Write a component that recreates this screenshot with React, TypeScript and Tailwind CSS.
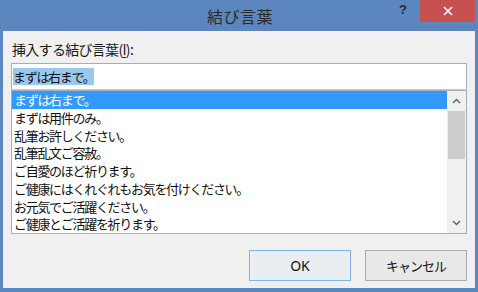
import React from "react";

const items = [
  "まずは右まで。",
  "まずは用件のみ。",
  "乱筆お許しください。",
  "乱筆乱文ご容赦。",
  "ご自愛のほど祈ります。",
  "ご健康にはくれぐれもお気を付けください。",
  "お元気でご活躍ください。",
  "ご健康とご活躍を祈ります。",
];

const font = { fontFamily: '"Noto Sans CJK JP", "Noto Sans", sans-serif' };

export default function App() {
  return (
    <div
      className="w-[478px] h-[292px] bg-[#5B87BE] flex flex-col overflow-hidden"
      style={font}
    >
      <div className="relative h-[31px] flex items-center justify-center shrink-0">
        <span className="text-[16px] text-[#2a2a2a] leading-none tracking-[0.5px] mt-[1px] ml-[2px]">結び言葉</span>
        <span className="absolute left-[399px] top-[3px] text-[13px] font-bold text-[#1e2a3a] leading-none" style={{ fontFamily: '"Liberation Sans", sans-serif' }}>?</span>
        <div className="absolute left-[420px] top-0 w-[55px] h-[22px] bg-[#C75050] flex items-center justify-center">
          <svg width="10" height="10" viewBox="0 0 10 10">
            <path d="M1 1 L9 9 M9 1 L1 9" stroke="#fff" strokeWidth="1.6" />
          </svg>
        </div>
      </div>
      <div className="mx-[3px] mb-[4px] flex-1 bg-[#F0F0F0] px-[8px] pt-[8px] flex flex-col">
        <div className="h-[20px] pl-[1px] flex items-center text-[14px] text-[#1a1a1a] tracking-[-0.7px]">
          挿入する結び言葉(<span className="underline underline-offset-2">I</span>):
        </div>
        <div className="mt-[4px] h-[27px] bg-white border border-[#ABADB3] border-b-[#C8C8C8] flex items-center pl-[1px]">
          <span className="bg-[#99C9EF] text-[13px] text-[#111] leading-[17px] tracking-[-1.3px]">まずは右まで。</span>
        </div>
        <div className="h-[144px] bg-white border border-[#ABADB3] flex overflow-hidden">
          <div className="flex-1 flex flex-col">
            {items.map((t, i) => (
              <div
                key={i}
                className={
                  "h-[17.75px] shrink-0 flex items-center pl-[2px] text-[13px] tracking-[-1.3px] " +
                  (i === 0 ? "bg-[#3399FF] text-white" : "text-[#111]")
                }
              >
                {t}
              </div>
            ))}
          </div>
          <div className="w-[19px] bg-[#F0F0F0] flex flex-col items-center">
            <div className="h-[20px] flex items-center justify-center">
              <svg width="9" height="6" viewBox="0 0 9 6">
                <path d="M1 5 L4.5 1.5 L8 5" stroke="#606060" strokeWidth="1.4" fill="none" />
              </svg>
            </div>
            <div className="w-[17px] h-[48px] bg-[#CDCDCD]" />
            <div className="flex-1" />
            <div className="h-[20px] flex items-center justify-center">
              <svg width="9" height="6" viewBox="0 0 9 6">
                <path d="M1 1 L4.5 4.5 L8 1" stroke="#606060" strokeWidth="1.4" fill="none" />
              </svg>
            </div>
          </div>
        </div>
        <div className="mt-[16px] flex justify-end gap-[14px]">
          <button className="w-[102px] h-[31px] border border-[#7EB4EA] bg-[#E9EEF3] text-[14px] text-[#111]" style={{ fontFamily: '"Noto Sans", sans-serif' }}>
            OK
          </button>
          <button className="w-[102px] h-[31px] border border-[#ACACAC] bg-[#E8E8E8] text-[13px] text-[#111] tracking-[-1px]">
            キャンセル
          </button>
        </div>
      </div>
    </div>
  );
}
